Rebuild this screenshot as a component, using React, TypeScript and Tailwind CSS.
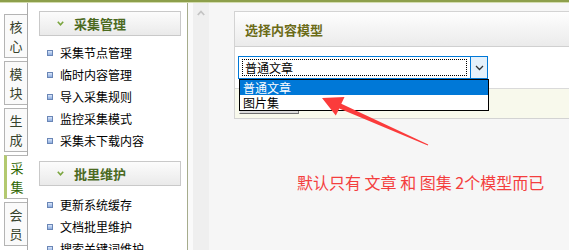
import React from "react";

const tabs: { a: string; b: string; active?: boolean }[] = [
  { a: "核", b: "心" },
  { a: "模", b: "块" },
  { a: "生", b: "成" },
  { a: "采", b: "集", active: true },
  { a: "会", b: "员" },
];

const sections = [
  { title: "采集管理", items: ["采集节点管理", "临时内容管理", "导入采集规则", "监控采集模式", "采集未下载内容"], gap: "mt-0", pt: "pt-[6px]" },
  { title: "批里维护", items: ["更新系统缓存", "文档批里维护", "搜索关键词维护"], gap: "mt-[9px]", pt: "pt-[8px]" },
];

function HeaderArrow() {
  return (
    <svg width="7" height="5" viewBox="0 0 7 5" className="shrink-0">
      <path d="M0.8 0.8 L3.5 3.8 L6.2 0.8" fill="none" stroke="#7aa53e" strokeWidth="1.6" />
    </svg>
  );
}

export default function App() {
  return (
    <div className="relative w-[569px] h-[250px] overflow-hidden flex flex-col font-['Noto_Sans_CJK_SC','Liberation_Sans',sans-serif] bg-white">
      <div className="h-[2px] bg-[#8d9f4b] shrink-0" />
      <div className="h-[1px] bg-[#d3dcae] shrink-0" />
      <div className="flex flex-1 min-h-0">
        {/* tab column */}
        <div className="w-[28px] shrink-0 border-r border-[#aaaaaa] bg-white pt-[11px] pl-[4px] flex flex-col gap-[3px]">
          {tabs.map((t) =>
            t.active ? (
              <div
                key={t.a}
                className="relative z-10 -mr-px w-[24px] h-[44px] bg-white border-t border-b border-[#b4b4b4] border-l-[3px] border-l-[#b3c96f] flex flex-col items-center justify-center text-[13px] leading-[19px] text-[#2e6600] pr-[1px]"
              >
                <span>{t.a}</span>
                <span>{t.b}</span>
              </div>
            ) : (
              <div
                key={t.a}
                className="w-[23px] h-[44px] bg-[#fafafa] border-t border-b border-l border-[#b4b4b4] flex flex-col items-center justify-center text-[13px] leading-[19px] text-[#37422c]"
              >
                <span>{t.a}</span>
                <span>{t.b}</span>
              </div>
            )
          )}
        </div>

        {/* menu column */}
        <div className="w-[160px] shrink-0 border-r border-[#a6ac8c] bg-white pl-[11px] pt-[8px]">
          {sections.map((s) => (
            <div key={s.title} className={s.gap}>
              <div className="w-[142px] h-[25px] border border-[#c9c9c9] bg-gradient-to-b from-[#fcfcfc] to-[#eaeaea] flex items-center pl-[17px]">
                <HeaderArrow />
                <span className="ml-[10px] text-[13px] font-bold leading-none text-[#4b6a1f]">{s.title}</span>
              </div>
              <ul className={s.pt}>
                {s.items.map((it) => (
                  <li key={it} className="h-[22px] flex items-center pl-[8px]">
                    <span className="w-[6px] h-[6px] border border-[#6a86b6] bg-gradient-to-b from-[#dbe7fa] to-[#8cacdf] shrink-0" />
                    <span className="ml-[7px] text-[12px] leading-none text-black whitespace-nowrap">{it}</span>
                  </li>
                ))}
              </ul>
            </div>
          ))}
        </div>

        {/* splitter + scroll strip */}
        <div className="w-[5px] shrink-0 bg-[#fafafa]" />
        <div className="w-[16px] shrink-0 bg-[#efefef] pt-[7px] pl-[4px]">
          <svg width="8" height="6" viewBox="0 0 8 6">
            <path d="M0.8 5 L4 1.5 L7.2 5" fill="none" stroke="#c4c4c4" strokeWidth="1.8" />
          </svg>
        </div>

        {/* main */}
        <div className="flex-1 min-w-0 bg-[#f6f6f6] pt-[8px] pl-[25px] flex flex-col">
          <div className="border-l border-t border-b border-[#d3d3d3] bg-white">
            <div className="h-[35px] border-b border-[#d0d0d0] bg-gradient-to-b from-[#fefefe] to-[#ebebeb] flex items-center pl-[10px]">
              <span className="text-[13px] font-bold leading-none text-[#6b6b17]">选择内容模型</span>
            </div>
            <div className="h-[41px] pt-[9px] pl-[3px]">
              <div className="relative w-[250px] h-[23px] border border-[#0078d7] bg-white flex">
                <div className="flex-1 pl-[3px] pr-[3px] py-[2px]">
                  <div className="h-full border border-dotted border-black flex items-center pl-[2px] text-[12px] leading-none text-black">
                    普通文章
                  </div>
                </div>
                <div className="w-[17px] border-l border-[#0078d7] bg-[#e5f1fb] flex items-center justify-center">
                  <svg width="9" height="6" viewBox="0 0 9 6">
                    <path d="M1 1 L4.5 4.5 L8 1" fill="none" stroke="#333333" strokeWidth="1.3" />
                  </svg>
                </div>
                <div className="absolute left-0 top-[22px] z-10 w-[250px] border border-black bg-white">
                  <div className="h-[15px] bg-[#0078d7] text-white text-[12px] leading-[15px] pl-[3px]">普通文章</div>
                  <div className="h-[15px] bg-white text-black text-[12px] leading-[15px] pl-[3px]">图片集</div>
                </div>
              </div>
            </div>
            <div className="h-[30px] border-t border-[#dadada] bg-[#f8f9ec] pt-[4px] pl-[4px]">
              <div className="w-[60px] h-[21px] bg-[#dcdcdc] border border-[#f4f4f4] border-r-[#808080] border-b-[#6f6f6f]" />
            </div>
          </div>
          <div className="mt-[53px] pl-[63px] text-[16px] leading-[20px] text-[#f43e3e] whitespace-nowrap">
            默认只有 文章 和 图集 2个模型而已
          </div>
        </div>
      </div>

      {/* annotation arrow */}
      <svg className="absolute inset-0 pointer-events-none z-20" width="569" height="250" viewBox="0 0 569 250">
        <polygon
          points="322,98 344.5,97 341.3,103.8 428.2,144.4 427.8,145.6 339.3,108.6 335.8,115.5"
          fill="#fb3b3b"
        />
      </svg>
    </div>
  );
}
